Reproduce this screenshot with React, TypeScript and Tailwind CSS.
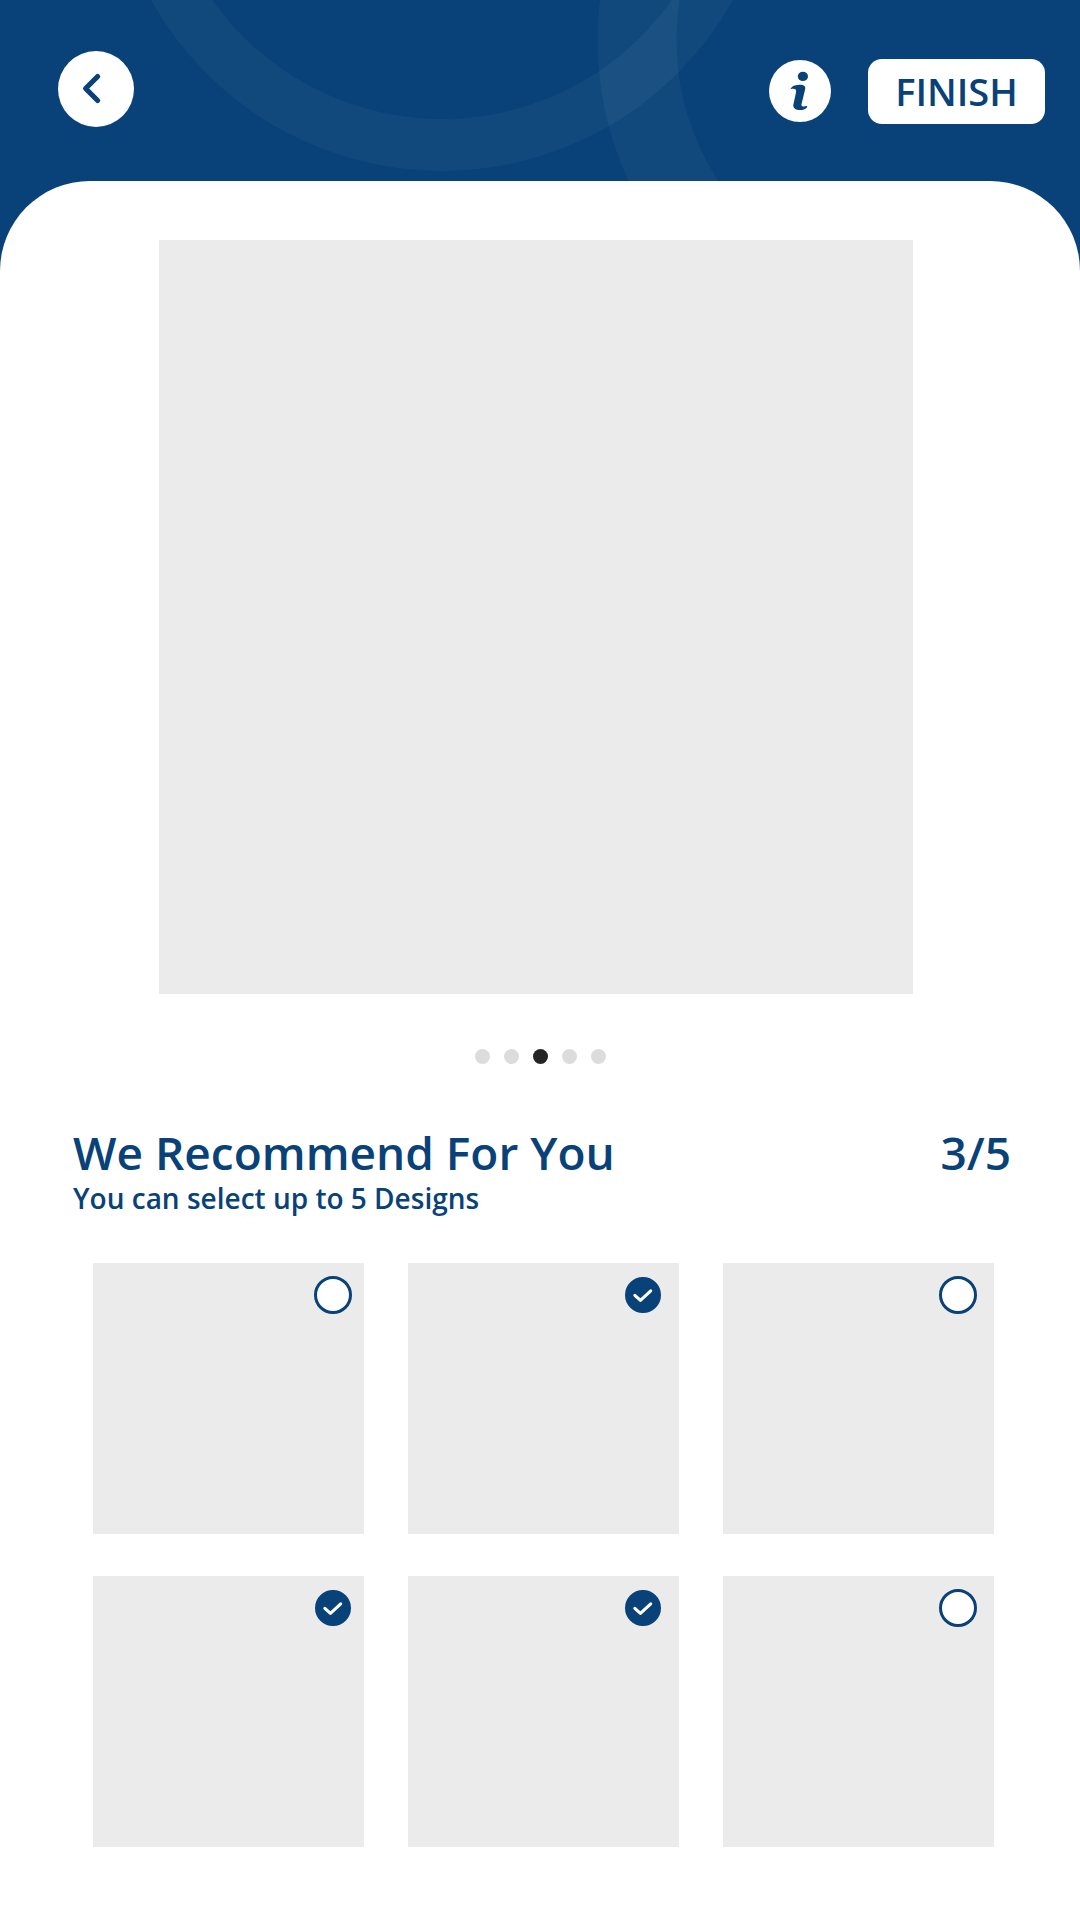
import { useState } from "react";

const slides = [1, 2, 3, 4, 5];
const designs = [1, 2, 3, 4, 5, 6];
const MAX_SELECTED = 5;

function HeaderRings() {
  return (
    <svg
      className="pointer-events-none absolute left-0 top-0"
      width="1080"
      height="280"
      viewBox="0 0 1080 280"
      fill="none"
      stroke="#ffffff"
      strokeOpacity="0.04"
      aria-hidden="true"
    >
      <circle cx="442" cy="-162" r="307" strokeWidth="52" />
      <circle cx="934" cy="40" r="297" strokeWidth="79" />
    </svg>
  );
}

function DesignCard({
  id,
  checked,
  onToggle,
}: {
  id: number;
  checked: boolean;
  onToggle: () => void;
}) {
  const firstColumn = id % 3 === 1;
  return (
    <label className="relative block aspect-square cursor-pointer bg-[#ebebeb]">
      <span
        className={
          firstColumn
            ? "absolute right-3 top-[13px] grid size-[38px] place-items-center"
            : "absolute right-[17px] top-[13px] grid size-[38px] place-items-center"
        }
      >
        <input
          type="checkbox"
          aria-label={`Design ${id}`}
          checked={checked}
          onChange={onToggle}
          className="peer col-start-1 row-start-1 size-[38px] appearance-none rounded-full border-3 border-[#084278] bg-white checked:size-9 checked:bg-[#084278]"
        />
        <svg
          className="pointer-events-none col-start-1 row-start-1 hidden size-9 peer-checked:block"
          viewBox="0 0 35 35"
          fill="none"
          stroke="#ffffff"
          strokeWidth="3"
          strokeLinecap="round"
          strokeLinejoin="round"
          aria-hidden="true"
        >
          <path d="M9.6 17.8 15 22.8 25 13.4" />
        </svg>
      </span>
    </label>
  );
}

export default function App() {
  const [slide, setSlide] = useState(3);
  const [selected, setSelected] = useState<number[]>([2, 4, 5]);

  const toggle = (id: number) =>
    setSelected((current) => {
      if (current.includes(id)) return current.filter((item) => item !== id);
      return current.length < MAX_SELECTED ? [...current, id] : current;
    });

  return (
    <div className="relative flex min-h-screen flex-col overflow-hidden bg-[#084278] font-['Open_Sans',sans-serif] text-[#084278]">
      <HeaderRings />

      <header className="relative flex items-center justify-between pb-[54px] pl-[58px] pr-[35px] pt-[51px]">
        <button type="button" aria-label="Back" className="size-[76px] rounded-full bg-white">
          <svg
            viewBox="0 0 76 76"
            fill="none"
            stroke="currentColor"
            strokeWidth="5.2"
            strokeLinecap="round"
            strokeLinejoin="round"
            aria-hidden="true"
          >
            <path d="M39.6 25.5 27.6 37.500 39.6 49.500" />
          </svg>
        </button>

        <div className="flex items-center gap-[37px] pt-1">
          <button type="button" aria-label="Information" className="size-[62px] rounded-full bg-white">
            <svg viewBox="0 0 62 62" fill="currentColor" aria-hidden="true">
              <ellipse cx="33.9" cy="16.4" rx="5.1" ry="4.700" />
              <path d="M21.6 29.200c.3-1.800 2-3 4.200-3.700 2.700-.8 6.400-.9 8.500-.2 1.800.6 2.300 2.200 1.800 4.200L32.600 43.800c-.4 1.700.1 2.700 1.500 2.700 1.500 0 2.500-.6 4.100-.6.3 1.400-1.200 2.800-3.200 3.500-2.700.9-6.700 1-8.700-.3-1.900-1.200-2.300-2.900-1.800-5.100l2.500-11.600c.5-2.300 0-3.300-1.800-3.500-1.200-.1-2.200.1-3.600.3z" />
            </svg>
          </button>
          <button
            type="button"
            className="flex h-[65px] w-[177px] items-center justify-center rounded-[14px] bg-white text-[38px] font-semibold leading-none"
          >
            FINISH
          </button>
        </div>
      </header>

      <main className="relative flex-1 rounded-t-[90px] bg-white pb-[73px] pt-[59px]">
        <div className="pl-[159px] pr-[167px]">
          <div className="aspect-square bg-[#ebebeb]" />
        </div>

        <nav aria-label="Slides" className="mt-[55px] flex justify-center gap-3.5">
          {slides.map((n) => (
            <button
              key={n}
              type="button"
              aria-label={`Slide ${n}`}
              aria-current={n === slide}
              onClick={() => setSlide(n)}
              className={
                n === slide
                  ? "size-[15px] rounded-full bg-[#242424]"
                  : "size-[15px] rounded-full bg-[#dcdcdc]"
              }
            />
          ))}
        </nav>

        <section>
          <div className="mt-[62px] flex items-start justify-between pl-[73px] pr-[69px] font-semibold">
            <div>
              <h1 className="text-[46px] leading-[52px]">We Recommend For You</h1>
              <p className="text-[28px] leading-[40px]">You can select up to 5 Designs</p>
            </div>
            <output className="text-[46px] leading-[52px]">
              {selected.length}/{MAX_SELECTED}
            </output>
          </div>

          <div className="mt-[45px] grid grid-cols-3 gap-x-11 gap-y-[42px] pl-[93px] pr-[86px]">
            {designs.map((id) => (
              <DesignCard
                key={id}
                id={id}
                checked={selected.includes(id)}
                onToggle={() => toggle(id)}
              />
            ))}
          </div>
        </section>
      </main>
    </div>
  );
}
